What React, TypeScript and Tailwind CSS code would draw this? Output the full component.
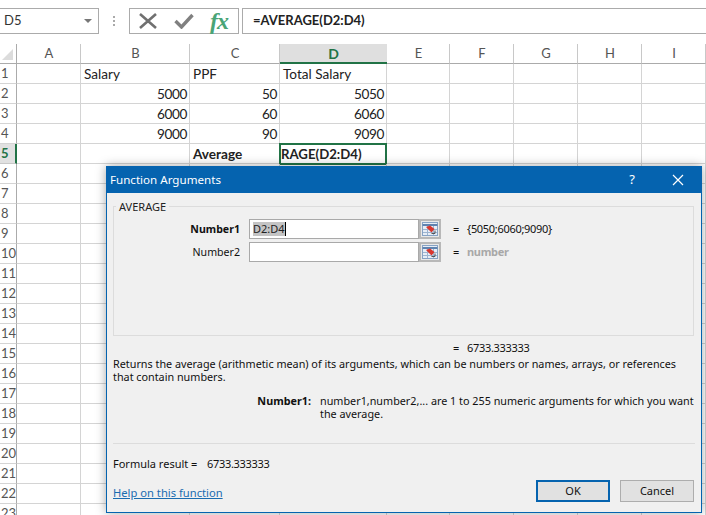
import React from 'react'

const columns = ['A', 'B', 'C', 'D', 'E', 'F', 'G', 'H', 'I']

type Cell = { text: string; right?: boolean; bold?: boolean }

const data: Record<number, Record<string, Cell>> = {
  1: { B: { text: 'Salary' }, C: { text: 'PPF' }, D: { text: 'Total Salary' } },
  2: { B: { text: '5000', right: true }, C: { text: '50', right: true }, D: { text: '5050', right: true } },
  3: { B: { text: '6000', right: true }, C: { text: '60', right: true }, D: { text: '6060', right: true } },
  4: { B: { text: '9000', right: true }, C: { text: '90', right: true }, D: { text: '9090', right: true } },
  5: { C: { text: 'Average', bold: true } },
}

const rows = Array.from({ length: 23 }, (_, i) => i + 1)

function RefEdit() {
  return (
    <div className="w-[22px] h-5 bg-[#e8e8e8] border-2 border-[#b8b8b8] flex items-center justify-center shrink-0">
      <svg width="16" height="14" viewBox="0 0 16 14">
        <rect x="0.5" y="0.5" width="15" height="13" fill="#e6edf6" stroke="#86a2c4" />
        <path d="M0.5 3H15.5" stroke="#5f83b0" strokeWidth="2" />
        <path d="M1 7.5H15M1 10.5H15M5.5 4V13M11.5 4V13" stroke="#9db4d0" strokeWidth="1" />
        <path d="M4 5L8 3.5L12.5 7L9.5 10.5Z" fill="#d9362e" />
        <path d="M9.5 11.5H13V8.5" stroke="#555" strokeWidth="1" fill="none" />
      </svg>
    </div>
  )
}

function ArgRow({ label, bold, value, muted, selected }: { label: string; bold?: boolean; value: string; muted?: boolean; selected?: boolean }) {
  return (
    <div className="flex items-center h-5">
      <div className={`w-[126px] pt-px text-right text-[10.6px] text-[#111] ${bold ? 'font-bold' : ''}`}>{label}</div>
      <div className="ml-[9px] w-[170px] h-5 bg-white border border-[#a9a9a9] flex items-center pl-[3px] text-[11px] text-[#222]">
        {selected && <span className="bg-[#c4c4c4] border-r border-black leading-[14px]">D2:D4</span>}
      </div>
      <RefEdit />
      <div className="ml-[12px] w-[14px] text-[11px] text-[#111]">=</div>
      <div className={`text-[11px] tracking-[-0.3px] ${muted ? 'font-bold text-[#a8a8a8]' : 'text-[#111]'}`}>{value}</div>
    </div>
  )
}

export default function App() {
  return (
    <div className="relative w-[706px] h-[515px] overflow-hidden bg-white font-['Lato',sans-serif]">
      {/* Formula bar */}
      <div className="h-[44px] pt-2 flex items-start">
        <div className="w-[99px] h-[26px] border border-[#ababab] border-l-0 flex items-center justify-between pl-[4px] pr-[6px] text-[13px] text-[#333]">
          D5
          <span className="w-0 h-0 border-x-4 border-x-transparent border-t-[4px] border-t-[#777]" />
        </div>
        <div className="w-[30px] h-[26px] flex items-center justify-center">
          <div className="flex flex-col gap-[2px]">
            <span className="w-[2px] h-[2px] bg-[#aaa]" />
            <span className="w-[2px] h-[2px] bg-[#aaa]" />
            <span className="w-[2px] h-[2px] bg-[#aaa]" />
          </div>
        </div>
        <div className="w-[110px] h-[26px] border border-[#ababab] flex items-center pl-[9px]">
          <svg width="18" height="16" viewBox="0 0 18 16">
            <path d="M1 1L17 15M17 1L1 15" stroke="#707070" strokeWidth="2.6" fill="none" />
          </svg>
          <svg className="ml-[17px]" width="20" height="16" viewBox="0 0 20 16">
            <path d="M1.5 8L7.5 14L18.5 2" stroke="#808080" strokeWidth="3.4" fill="none" />
          </svg>
          <span className="ml-[16px] font-['Liberation_Serif',serif] italic font-bold text-[24px] leading-none text-[#4aa477] tracking-[-1px]">fx</span>
        </div>
        <div className="ml-[3px] flex-1 h-[26px] border-y border-l border-[#ababab] flex items-center pl-[10px] text-[13px] font-bold text-[#222]">
          =AVERAGE(D2:D4)
        </div>
      </div>

      {/* Sheet */}
      <div className="grid grid-cols-[17px_64px_109px_90px_107px_63px_64px_64px_64px_64px] auto-rows-[20px] text-[13.6px] text-[#222]">
        <div className="border-r border-b border-[#ababab] flex items-end justify-end pr-[3px] pb-[3px]">
          <span className="w-0 h-0 border-l-[11px] border-l-transparent border-b-[11px] border-b-[#dcdcdc]" />
        </div>
        {columns.map((c) => (
          <div
            key={c}
            className={
              c === 'D'
                ? 'flex items-center justify-center bg-[#dfdfdf] border-b-2 border-[#217346] text-[#217346] font-bold text-[14px]'
                : 'flex items-center justify-center pl-px border-r border-b border-[#c8c8c8] border-b-[#ababab] text-[13px] text-[#555]'
            }
          >
            {c}
          </div>
        ))}
        {rows.map((r) => (
          <React.Fragment key={r}>
            <div
              className={
                r === 5
                  ? 'flex items-center pl-[1px] bg-[#e1e1e1] border-r-2 border-[#217346] border-b border-b-[#c8c8c8] text-[#217346] font-bold text-[13px]'
                  : 'flex items-center pl-[1px] border-r border-[#ababab] border-b border-b-[#d4d4d4] text-[13px] text-[#555]'
              }
            >
              {r}
            </div>
            {columns.map((c) => {
              const cell = data[r]?.[c]
              return (
                <div
                  key={c}
                  className={`relative flex items-center pt-px pl-[3px] pr-[2px] border-r border-b border-[#d4d4d4] whitespace-nowrap ${cell?.right ? 'justify-end tracking-[-0.4px]' : ''} ${cell?.bold ? 'font-bold' : ''}`}
                >
                  {cell?.text}
                  {r === 5 && c === 'D' && (
                    <div className="absolute -left-px -top-px w-[108px] h-[22px] pt-px border-2 border-[#217346] bg-white overflow-hidden flex items-center font-bold text-[13.2px]">
                      <span>RAGE(D2:D4)</span>
                    </div>
                  )}
                </div>
              )
            })}
          </React.Fragment>
        ))}
      </div>

      {/* Function Arguments dialog */}
      <div className="absolute left-[106px] top-[166px] w-[596px] h-[347px] bg-[#f0f0f0] border border-[#0563af] shadow-[0_0_10px_rgba(0,0,0,0.35)] flex flex-col font-['Noto_Sans',sans-serif]">
        <div className="h-[26px] bg-[#0563af] flex items-center pl-[3px] text-white text-[11.6px] shrink-0">
          <span className="flex-1">Function Arguments</span>
          <span className="mr-[37px] text-[13px]">?</span>
          <svg className="mr-[17px]" width="12" height="12" viewBox="0 0 12 12">
            <path d="M1 1L11 11M11 1L1 11" stroke="#fff" strokeWidth="1.2" />
          </svg>
        </div>
        <div className="flex-1 px-[6px] flex flex-col">
          <div className="relative mt-[13px] h-[130px] w-[581px] border border-[#dcdcdc] pt-[12px] flex flex-col gap-[3px]">
            <span className="absolute left-[2px] -top-[8px] px-[3px] bg-[#f0f0f0] text-[11px] leading-[15px] text-[#222]">AVERAGE</span>
            <ArgRow label="Number1" bold value="{5050;6060;9090}" selected />
            <ArgRow label="Number2" value="number" muted />
          </div>
          <div className="mt-[4px] h-4 pl-[340px] flex items-center text-[11px] text-[#111]">
            <span className="w-[14px]">=</span>
            <span className="tracking-[-0.3px]">6733.333333</span>
          </div>
          <p className="mt-px text-[10.8px] leading-[13px] text-[#111] whitespace-nowrap">
            Returns the average (arithmetic mean) of its arguments, which can be numbers or names, arrays, or references
            <br />
            that contain numbers.
          </p>
          <div className="mt-[11px] flex text-[10.8px] leading-[13px] text-[#111]">
            <span className="w-[198px] shrink-0 text-right font-bold">Number1:</span>
            <span className="ml-[9px] whitespace-nowrap">
              number1,number2,... are 1 to 255 numeric arguments for which you want
              <br />
              the average.
            </span>
          </div>
          <div className="mt-[23px] h-px bg-[#dcdcdc]" />
          <div className="mt-[13px] flex text-[11px] leading-[14px] text-[#111]">
            <span className="w-[94px]">Formula result =</span>
            <span className="tracking-[-0.3px]">6733.333333</span>
          </div>
          <div className="mt-[9px] flex items-center pr-px">
            <a className="flex-1 pt-[5px] text-[11.2px] text-[#1a6cb0] underline">Help on this function</a>
            <button className="w-[74px] h-[22px] bg-[#e1e1e1] border-2 border-[#0563af] text-[11px] text-[#111]">OK</button>
            <button className="ml-[10px] w-[74px] h-[22px] bg-[#e1e1e1] border border-[#adadad] text-[11px] text-[#111]">Cancel</button>
          </div>
        </div>
      </div>
    </div>
  )
}
